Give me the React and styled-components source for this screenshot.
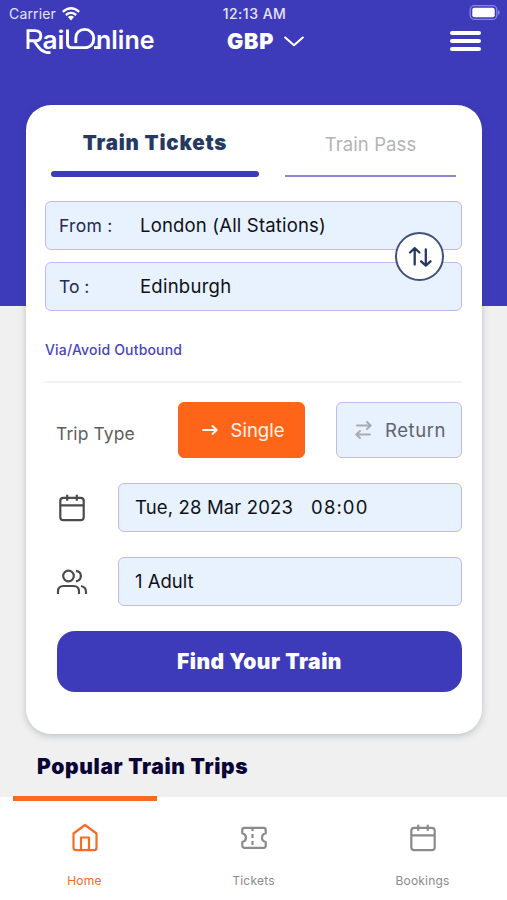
import React from 'react';
import styled, { createGlobalStyle } from 'styled-components';

const GlobalStyle = createGlobalStyle`
  * {
    box-sizing: border-box;
  }

  body {
    margin: 0;
    font-family: Inter, "Liberation Sans", sans-serif;
    color: #0d1117;
  }

  button {
    font-family: inherit;
    margin: 0;
    padding: 0;
    border: 0;
    background: none;
  }

  svg {
    display: block;
    flex: none;
  }
`;

const Screen = styled.div`
  width: 507px;
  height: 900px;
  overflow: hidden;
  display: flex;
  flex-direction: column;
  background: linear-gradient(#3e3bbb 306px, #f0f0f0 306px);
`;

const Label = styled.span`
  font-size: ${({ $size }) => $size}px;
  font-weight: ${({ $weight }) => $weight || 400};
  letter-spacing: ${({ $track }) => $track || 0}px;
  line-height: 1.2;
  white-space: pre;
`;

const StatusBar = styled.div`
  height: 27px;
  padding: 1px 7px 0 9px;
  display: grid;
  grid-template-columns: 1fr auto 1fr;
  align-items: center;
  color: #e4e4fb;
`;

const Carrier = styled.div`
  display: flex;
  align-items: center;
  gap: 6px;
`;

const BatteryBox = styled.div`
  padding-bottom: 3px;
  display: flex;
  justify-content: flex-end;
`;

const Header = styled.header`
  height: 78px;
  padding: 0 26px;
  display: flex;
  align-items: flex-start;
  color: #ffffff;
`;

const LogoSvg = styled.svg`
  margin: -8px -4px 0 0;
`;

const Currency = styled.button`
  margin: 2px auto 0 73px;
  display: flex;
  align-items: center;
  gap: 10px;
  color: #ffffff;
`;

const MenuButton = styled.button`
  margin-top: 4px;
  width: 31px;
  display: flex;
  flex-direction: column;
  gap: 4px;
`;

const MenuLine = styled.span`
  height: 4px;
  border-radius: 2px;
  background: #ffffff;
`;

const Card = styled.main`
  width: 456px;
  height: 629px;
  margin-left: 26px;
  padding: 0 20px 0 19px;
  display: flex;
  flex-direction: column;
  flex: none;
  border-radius: 25px;
  background: #ffffff;
  box-shadow: 0 2px 7px rgba(40, 50, 70, 0.25);
`;

const Tabs = styled.div`
  height: 96px;
  padding: 0 6px;
  display: flex;
  justify-content: space-between;
  align-items: flex-start;
`;

const Tab = styled.button`
  width: ${({ $active }) => ($active ? 208 : 171)}px;
  height: 72px;
  padding-top: ${({ $active }) => ($active ? 26 : 28)}px;
  display: flex;
  flex-direction: column;
  align-items: center;
  justify-content: space-between;
  color: ${({ $active }) => ($active ? '#253962' : '#b4b4b4')};

  &::after {
    content: '';
    width: 100%;
    height: ${({ $active }) => ($active ? 6 : 2)}px;
    border-radius: ${({ $active }) => ($active ? 3 : 0)}px;
    background: ${({ $active }) => ($active ? '#3e3bbb' : '#8f87d4')};
  }
`;

const Route = styled.div`
  position: relative;
  display: flex;
  flex-direction: column;
  gap: 12px;
`;

const Field = styled.div`
  height: 49px;
  padding-left: ${({ $inset }) => $inset}px;
  display: flex;
  flex: ${({ $fixed }) => ($fixed ? 'none' : 1)};
  align-items: center;
  border: 1.5px solid #c0b7f3;
  border-radius: 6px;
  background: #e8f1fe;
`;

const FieldName = styled.div`
  width: 81px;
  color: #252a55;
`;

const SwapButton = styled.button`
  position: absolute;
  top: 31px;
  right: 18px;
  width: 49px;
  height: 49px;
  display: flex;
  align-items: center;
  justify-content: center;
  border: 2px solid #43517a;
  border-radius: 50%;
  background: #ffffff;
  color: #253962;
`;

const ViaLink = styled.a`
  height: 72px;
  padding-top: 31px;
  display: flex;
  align-items: flex-start;
  border-bottom: 2px solid #f3f3f5;
  color: #4a43bd;
`;

const TripType = styled.div`
  height: 56px;
  margin: 19px 0 25px;
  padding-left: 11px;
  display: flex;
  align-items: center;
  color: #5e5e5e;
`;

const TripName = styled.div`
  width: 122px;
  padding-top: 6px;
`;

const TripButton = styled.button`
  width: ${({ $active }) => ($active ? 127 : 126)}px;
  height: 56px;
  margin-right: ${({ $active }) => ($active ? 31 : 0)}px;
  padding-left: 3px;
  display: flex;
  align-items: center;
  justify-content: center;
  gap: 13px;
  border: 1.5px solid ${({ $active }) => ($active ? '#ff6519' : '#c0b7f3')};
  border-radius: 6px;
  background: ${({ $active }) => ($active ? '#ff6519' : '#e8f1fe')};
  color: ${({ $active }) => ($active ? '#fff5ec' : '#5c646e')};
`;

const DetailRow = styled.div`
  margin-bottom: 25px;
  display: flex;
  align-items: center;
  color: #4b4b4b;
`;

const DetailIcon = styled.div`
  width: 73px;
  padding-right: 19px;
  display: flex;
  justify-content: center;
`;

const Value = styled(Label)`
  color: #0d1117;
`;

const Time = styled(Value)`
  margin-left: 18px;
`;

const FindButton = styled.button`
  height: 61px;
  margin-left: 12px;
  display: flex;
  align-items: center;
  justify-content: center;
  border-radius: 18px;
  background: #3e3bbb;
  color: #ffffff;
`;

const Popular = styled.h2`
  height: 63px;
  margin: 0;
  padding: 20px 0 0 37px;
  display: flex;
  align-items: flex-start;
  color: #0b0436;
`;

const BottomNav = styled.nav`
  height: 103px;
  display: grid;
  grid-template-columns: repeat(3, 1fr);
  background: #ffffff;
`;

const NavItem = styled.a`
  padding-top: 26px;
  display: flex;
  flex-direction: column;
  align-items: center;
  gap: 21px;
  color: ${({ $active }) => ($active ? '#f96a26' : '#8b8b8b')};
`;

const NavMarker = styled.span`
  width: 144px;
  height: 5px;
  margin: -27px 0 1px;
  background: #fb6a21;
`;

function Logo() {
  return (
    <LogoSvg width="132" height="44" viewBox="0 -8 132 44" fill="none" stroke="#fff" strokeWidth="2.9">
      <g fill="#fff" stroke="none" fontFamily="Inter, sans-serif" fontWeight="600">
        <text x="16.5" y="22" fontSize="25" textLength="22" lengthAdjust="spacingAndGlyphs">ai</text>
        <text x="70" y="22" fontSize="25" textLength="58.5" lengthAdjust="spacingAndGlyphs">nline</text>
      </g>
      <path d="M2 22V3.6H9C12.8 3.6 14.8 5.6 14.8 8.7S12.8 13.8 9 13.8H2" />
      <path d="M8 14C11 18 14.5 26 24.5 25.6" />
      <path d="M41.5 2.5V16.3C41.5 19.3 42.8 20.6 45.5 20.6H59C64.5 20.6 67.7 16.5 67.7 11.7C67.7 6 63.8 2.4 58.7 2.4C53.5 2.4 49.8 6 49.8 11V16" />
      <path d="M68 20.6H73" />
    </LogoSvg>
  );
}

function WifiIcon() {
  return (
    <svg width="18" height="14" viewBox="0 0 18 14" fill="none" stroke="#fff" strokeWidth="2.3">
      <path d="M0.8 4.8Q9 -2.2 17.2 4.8" />
      <path d="M3.8 8Q9 3.8 14.2 8" />
      <path d="M5.9 10.1Q9 7.6 12.1 10.1L9 13.6Z" fill="#fff" stroke="none" />
    </svg>
  );
}

function BatteryIcon() {
  return (
    <svg width="31" height="15" viewBox="0 0 31 15">
      <rect x="1.2" y="0.7" width="26.6" height="13.6" rx="4" fill="none" stroke="#8886dc" strokeWidth="1.3" />
      <rect x="3.3" y="2.8" width="22.4" height="9.4" rx="2" fill="#fff" />
      <path d="M29 5V10Q30.8 9.4 30.8 7.5T29 5Z" fill="#8886dc" />
    </svg>
  );
}

function Chevron() {
  return (
    <svg width="20" height="11" viewBox="0 0 20 11" fill="none" stroke="#fff" strokeWidth="2.1" strokeLinecap="round" strokeLinejoin="round">
      <path d="M1.2 1.5L10 9.2L18.8 1.5" />
    </svg>
  );
}

function SwapIcon() {
  return (
    <svg width="24" height="22" viewBox="0 0 24 22" fill="none" stroke="currentColor" strokeWidth="2.3" strokeLinecap="round" strokeLinejoin="round">
      <path d="M6.7 18.5V2.5M2 6.5L6.7 2.2L11.4 6.5M17.8 3.5V19.3M13.1 15.3L17.8 19.6L22.5 15.3" />
    </svg>
  );
}

function ArrowRight() {
  return (
    <svg width="16" height="12" viewBox="0 0 16 12" fill="none" stroke="currentColor" strokeWidth="2" strokeLinecap="round" strokeLinejoin="round">
      <path d="M1 6H14.5M10.5 2L14.7 6L10.5 10" />
    </svg>
  );
}

function ReturnArrows() {
  return (
    <svg width="17" height="20" viewBox="0 0 17 20" fill="none" stroke="#a9acb2" strokeWidth="1.9" strokeLinecap="round" strokeLinejoin="round">
      <path d="M2 5.5H15.5M12 2L15.8 5.5L12 9M15 14.5H1.5M5 11L1.2 14.5L5 18" />
    </svg>
  );
}

function CalendarIcon() {
  return (
    <svg width="28" height="30" viewBox="0 0 28 30" fill="none" stroke="currentColor" strokeWidth="2.2">
      <rect x="2.3" y="4.8" width="23.4" height="22.4" rx="3" />
      <path d="M2.3 12.3H25.7M9.2 1.7V7.7M18.8 1.7V7.7" />
    </svg>
  );
}

function PeopleIcon() {
  return (
    <svg width="32" height="28" viewBox="0 0 32 28" fill="none" stroke="currentColor" strokeWidth="2.2">
      <circle cx="12.5" cy="8" r="5.3" />
      <path d="M2 26V23.5Q2 18 7.5 18H17.5Q23 18 23 23.5V26" />
      <path d="M20 2.8C26.5 3.8 26.5 12.2 20 13.3M25 18Q30 19 30 24V26" />
    </svg>
  );
}

function HomeIcon() {
  return (
    <svg width="28" height="30" viewBox="0 0 28 30" fill="none" stroke="currentColor" strokeWidth="2.2" strokeLinejoin="round">
      <path d="M2.5 10.5L14 2L25.5 10.5V24.7Q25.5 27.2 23 27.2H5Q2.5 27.2 2.5 24.7Z" />
      <path d="M10 27V14.5H18V27" />
    </svg>
  );
}

function TicketIcon() {
  return (
    <svg width="28" height="30" viewBox="0 0 28 30" fill="none" stroke="currentColor" strokeWidth="2.2">
      <path d="M4.3 4.8H23.7Q25.7 4.8 25.7 6.8V10.3Q22 11.3 22 14.7T25.7 19V22.8Q25.7 24.8 23.7 24.8H4.3Q2.3 24.8 2.3 22.8V19Q6 18 6 14.7T2.3 10.3V6.8Q2.3 4.8 4.3 4.8Z" />
      <path d="M12.5 5V25" strokeDasharray="4 3" strokeDashoffset="1" />
    </svg>
  );
}

function App() {
  return (
    <>
      <GlobalStyle />
      <Screen>
        <StatusBar>
          <Carrier>
            <Label $size={14} $track={0.15}>Carrier</Label>
            <WifiIcon />
          </Carrier>
          <Label $size={14} $weight={500} $track={0.5}>12:13 AM</Label>
          <BatteryBox>
            <BatteryIcon />
          </BatteryBox>
        </StatusBar>
        <Header>
          <Logo />
          <Currency>
            <Label $size={21.5} $weight={900} $track={0.8}>GBP</Label>
            <Chevron />
          </Currency>
          <MenuButton aria-label="Menu">
            <MenuLine />
            <MenuLine />
            <MenuLine />
          </MenuButton>
        </Header>

        <Card>
          <Tabs>
            <Tab $active>
              <Label $size={20.5} $weight={900} $track={0.8}>Train Tickets</Label>
            </Tab>
            <Tab>
              <Label $size={18.5} $track={0.1}>Train Pass</Label>
            </Tab>
          </Tabs>

          <Route>
            <Field $fixed $inset={13}>
              <FieldName>
                <Label $size={17.5} $track={0.3}>From :</Label>
              </FieldName>
              <Value $size={18.5} $track={0.18}>London (All Stations)</Value>
            </Field>
            <Field $fixed $inset={13}>
              <FieldName>
                <Label $size={17.5}>To :</Label>
              </FieldName>
              <Value $size={18.5} $track={0.25}>Edinburgh</Value>
            </Field>
            <SwapButton aria-label="Swap stations">
              <SwapIcon />
            </SwapButton>
          </Route>

          <ViaLink>
            <Label $size={14} $weight={500} $track={0.18}>Via/Avoid Outbound</Label>
          </ViaLink>

          <TripType>
            <TripName>
              <Label $size={17.5} $track={0.1}>Trip Type</Label>
            </TripName>
            <TripButton $active>
              <ArrowRight />
              <Label $size={18.5}>Single</Label>
            </TripButton>
            <TripButton>
              <ReturnArrows />
              <Label $size={18.5} $track={0.6}>Return</Label>
            </TripButton>
          </TripType>

          <DetailRow>
            <DetailIcon>
              <CalendarIcon />
            </DetailIcon>
            <Field $inset={16}>
              <Value $size={18.5} $track={0.15}>Tue, 28 Mar 2023</Value>
              <Time $size={18.5} $track={1.1}>08:00</Time>
            </Field>
          </DetailRow>
          <DetailRow>
            <DetailIcon>
              <PeopleIcon />
            </DetailIcon>
            <Field $inset={16}>
              <Value $size={18.5}>1 Adult</Value>
            </Field>
          </DetailRow>

          <FindButton>
            <Label $size={21} $weight={900} $track={0.5}>Find Your Train</Label>
          </FindButton>
        </Card>

        <Popular>
          <Label $size={21} $weight={900} $track={0.66}>Popular Train Trips</Label>
        </Popular>

        <BottomNav>
          <NavItem $active>
            <NavMarker />
            <HomeIcon />
            <Label $size={12} $track={0.25}>Home</Label>
          </NavItem>
          <NavItem>
            <TicketIcon />
            <Label $size={12} $track={0.25}>Tickets</Label>
          </NavItem>
          <NavItem>
            <CalendarIcon />
            <Label $size={12} $track={0.2}>Bookings</Label>
          </NavItem>
        </BottomNav>
      </Screen>
    </>
  );
}

export default App;
